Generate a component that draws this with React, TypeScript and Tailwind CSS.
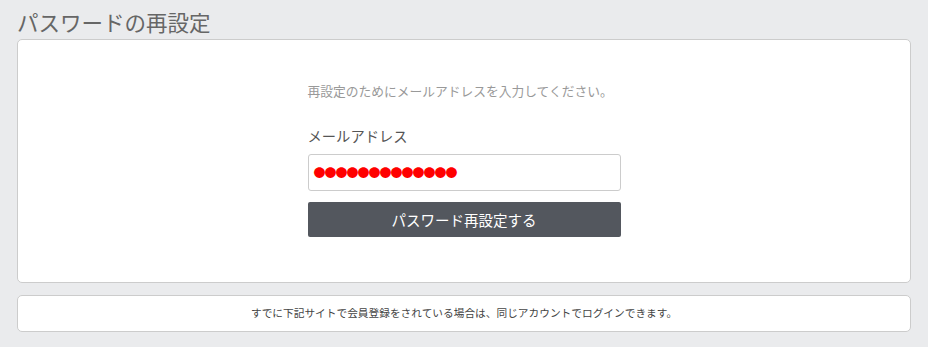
import React from "react";

export default function App() {
  const font = { fontFamily: '"Noto Sans CJK JP", "Noto Sans", sans-serif' };
  return (
    <div className="w-[928px] h-[347px] bg-[#eaebed] px-[17px] pt-[6px]" style={font}>
      <h1 className="text-[21.5px] leading-[32px] text-[#666666] font-normal">パスワードの再設定</h1>
      <div className="mt-[1px] h-[244px] bg-white border border-[#cccccc] rounded-[5px] flex justify-center">
        <div className="w-[313px] pt-[41px]">
          <p className="text-[12.75px] leading-[20px] text-[#999999] whitespace-nowrap">再設定のためにメールアドレスを入力してください。</p>
          <label className="block mt-[25px] text-[14.3px] leading-[20px] text-[#555555]">メールアドレス</label>
          <div className="mt-[8px] h-[37px] border border-[#cccccc] rounded-[3px] flex items-center px-[5px] text-[#ff0000] text-[12px] leading-none tracking-[-1px]">
            ●●●●●●●●●●●●●
          </div>
          <button className="mt-[11px] w-full h-[35px] bg-[#53575e] rounded-[2px] text-white text-[14.5px] leading-[20px]">
            パスワード再設定する
          </button>
        </div>
      </div>
      <div className="mt-[12px] h-[37px] bg-white border border-[#cccccc] rounded-[5px] flex items-center justify-center">
        <p className="text-[10.7px] text-[#444444] whitespace-nowrap">すでに下記サイトで会員登録をされている場合は、同じアカウントでログインできます。</p>
      </div>
    </div>
  );
}
